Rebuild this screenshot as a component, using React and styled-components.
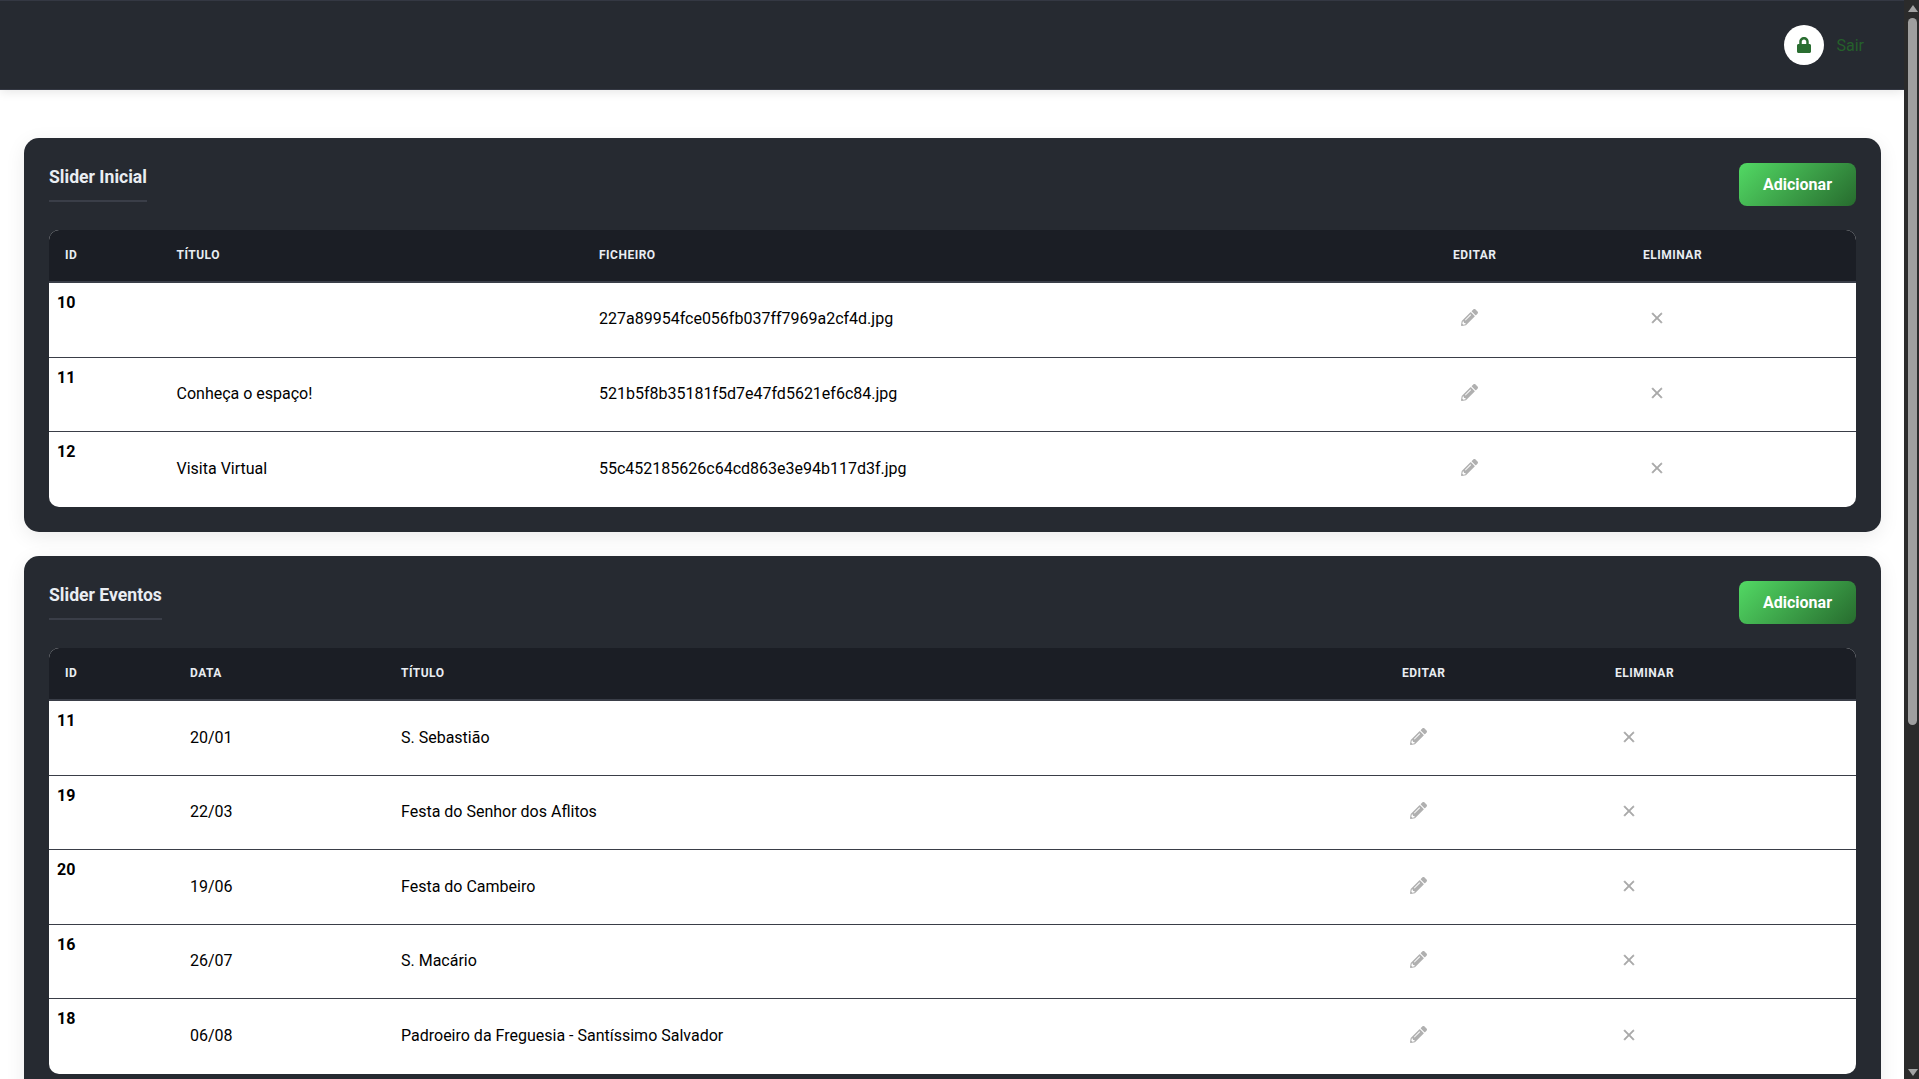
import React from 'react';
import styled, { createGlobalStyle } from 'styled-components';
import { FaLock, FaPencilAlt } from 'react-icons/fa';
import { MdClose } from 'react-icons/md';

const GlobalStyle = createGlobalStyle`
  html,
  body {
    height: 100%;
    overflow: hidden;
  }
  body {
    margin: 0;
    background: #fff;
    font-family: Roboto, "Liberation Sans", sans-serif;
    font-size: 16px;
    color: #000;
  }
`;

const sliders = [
  { id: 10, title: '', file: '227a89954fce056fb037ff7969a2cf4d.jpg' },
  { id: 11, title: 'Conheça o espaço!', file: '521b5f8b35181f5d7e47fd5621ef6c84.jpg' },
  { id: 12, title: 'Visita Virtual', file: '55c452185626c64cd863e3e94b117d3f.jpg' },
];

const events = [
  { id: 11, date: '20/01', title: 'S. Sebastião' },
  { id: 19, date: '22/03', title: 'Festa do Senhor dos Aflitos' },
  { id: 20, date: '19/06', title: 'Festa do Cambeiro' },
  { id: 16, date: '26/07', title: 'S. Macário' },
  { id: 18, date: '06/08', title: 'Padroeiro da Freguesia - Santíssimo Salvador' },
];

const App = () => {
  return (
    <>
      <GlobalStyle />
      <Page>
        <Content>
          <Header>
            <LockBadge>
              <FaLock />
            </LockBadge>
            <Logout>Sair</Logout>
          </Header>
          <Main>
            <Panel>
              <PanelHead>
                <PanelTitle>Slider Inicial</PanelTitle>
                <AddButton>Adicionar</AddButton>
              </PanelHead>
              <Table>
                <colgroup>
                  <Col $w={111.5} />
                  <Col $w={422.5} />
                  <Col $w={854} />
                  <Col $w={190} />
                  <Col $w={229} />
                </colgroup>
                <thead>
                  <tr>
                    <Th>ID</Th>
                    <Th>Título</Th>
                    <Th>Ficheiro</Th>
                    <Th>Editar</Th>
                    <Th>Eliminar</Th>
                  </tr>
                </thead>
                <tbody>
                  {sliders.map((row) => (
                    <Row key={row.id}>
                      <IdCell>{row.id}</IdCell>
                      <Td>{row.title}</Td>
                      <Td>{row.file}</Td>
                      <Td><EditIcon /></Td>
                      <Td><DeleteIcon /></Td>
                    </Row>
                  ))}
                </tbody>
              </Table>
            </Panel>
            <Panel>
              <PanelHead>
                <PanelTitle>Slider Eventos</PanelTitle>
                <AddButton>Adicionar</AddButton>
              </PanelHead>
              <Table>
                <colgroup>
                  <Col $w={125} />
                  <Col $w={211} />
                  <Col $w={1001} />
                  <Col $w={213} />
                  <Col $w={257} />
                </colgroup>
                <thead>
                  <tr>
                    <Th>ID</Th>
                    <Th>Data</Th>
                    <Th>Título</Th>
                    <Th>Editar</Th>
                    <Th>Eliminar</Th>
                  </tr>
                </thead>
                <tbody>
                  {events.map((row) => (
                    <Row key={row.id}>
                      <IdCell>{row.id}</IdCell>
                      <Td>{row.date}</Td>
                      <Td>{row.title}</Td>
                      <Td><EditIcon /></Td>
                      <Td><DeleteIcon /></Td>
                    </Row>
                  ))}
                </tbody>
              </Table>
            </Panel>
          </Main>
        </Content>
        <ScrollBar>
          <ArrowUp />
          <ScrollTrack>
            <ScrollThumb />
          </ScrollTrack>
          <ArrowDown />
        </ScrollBar>
      </Page>
    </>
  );
};

export default App;

// Styled components
const Page = styled.div`
  display: flex;
  height: 100vh;
`;

const Content = styled.div`
  flex: 1;
  min-width: 0;
  overflow: hidden;
`;

const Header = styled.header`
  height: 90px;
  box-sizing: border-box;
  display: flex;
  align-items: center;
  justify-content: flex-end;
  gap: 12px;
  padding-right: 40px;
  background: #262a31;
  border-top: 1px solid #343843;
  border-bottom: 1px solid #343843;
  box-shadow: 0 2px 10px rgba(0, 0, 0, 0.1);
`;

const LockBadge = styled.div`
  width: 40px;
  height: 40px;
  border-radius: 50%;
  background: #fff;
  color: #2a6e31;
  font-size: 16px;
  display: flex;
  align-items: center;
  justify-content: center;
`;

const Logout = styled.span`
  color: #25602b;
  font-size: 16px;
`;

const Main = styled.main`
  padding: 48px 23px 0 24px;
  display: flex;
  flex-direction: column;
  gap: 24.75px;
`;

const Panel = styled.section`
  background: #262a31;
  border-radius: 15px;
  padding: 25px;
  box-shadow: 0 5px 20px rgba(0, 0, 0, 0.08);
`;

const PanelHead = styled.div`
  display: flex;
  align-items: flex-start;
  justify-content: space-between;
  margin-bottom: 24px;
`;

const PanelTitle = styled.h2`
  margin: 0;
  padding-bottom: 9px;
  border-bottom: 2px solid #3a3e48;
  color: #e9edf2;
  font-size: 17.6px;
  line-height: 28px;
  font-weight: 700;
`;

const AddButton = styled.button`
  width: 117px;
  height: 43px;
  border: none;
  border-radius: 8px;
  background: linear-gradient(135deg, #52d964, #276b2e);
  color: #fff;
  font-family: inherit;
  font-size: 16px;
  font-weight: 700;
  cursor: pointer;
`;

const Table = styled.table`
  width: 100%;
  table-layout: fixed;
  border-collapse: separate;
  border-spacing: 0;
  background: #fff;
  border-radius: 10px;
  overflow: hidden;
`;

const Col = styled.col`
  width: ${(p) => p.$w}px;
`;

const Th = styled.th`
  height: 53px;
  box-sizing: border-box;
  padding: 0 16px 2px;
  text-align: left;
  background: #1b1e25;
  border-bottom: 2px solid #3a3e48;
  color: #e9edf2;
  font-size: 12px;
  font-weight: 700;
  letter-spacing: 0.5px;
  text-transform: uppercase;
`;

const Row = styled.tr`
  height: 74.5px;

  &:not(:last-child) td {
    border-bottom: 1px solid #3a3e48;
  }
`;

const Td = styled.td`
  padding: 0 16px 2px;
  font-size: 16px;
  color: #000;
`;

const IdCell = styled.td`
  padding: 8px 8px 0;
  vertical-align: top;
  font-size: 16px;
  font-weight: 700;
  line-height: 24px;
  color: #000;
`;

const EditIcon = styled(FaPencilAlt)`
  display: block;
  margin: 0 0 2px 8px;
  color: #b0b0b0;
  font-size: 17px;
`;

const DeleteIcon = styled(MdClose)`
  display: block;
  margin: 0 0 1px 5px;
  color: #a9a9a9;
  font-size: 18px;

  path:not([fill='none']) {
    stroke: currentColor;
    stroke-width: 0.7;
  }
`;

const ScrollBar = styled.div`
  width: 15px;
  flex: none;
  display: flex;
  flex-direction: column;
  align-items: center;
  background: #2b2b2b;
`;

const ArrowUp = styled.div`
  flex: none;
  width: 0;
  height: 0;
  margin: 5px 0 0 2px;
  border-left: 5px solid transparent;
  border-right: 5px solid transparent;
  border-bottom: 7px solid #a3a3a3;
`;

const ArrowDown = styled.div`
  flex: none;
  width: 0;
  height: 0;
  margin: 0 0 3px 2px;
  border-left: 5px solid transparent;
  border-right: 5px solid transparent;
  border-top: 7px solid #a3a3a3;
`;

const ScrollTrack = styled.div`
  flex: 1;
  padding-top: 6px;
`;

const ScrollThumb = styled.div`
  width: 9px;
  height: 707px;
  margin-left: 2px;
  border-radius: 5px;
  background: #9f9f9f;
`;
